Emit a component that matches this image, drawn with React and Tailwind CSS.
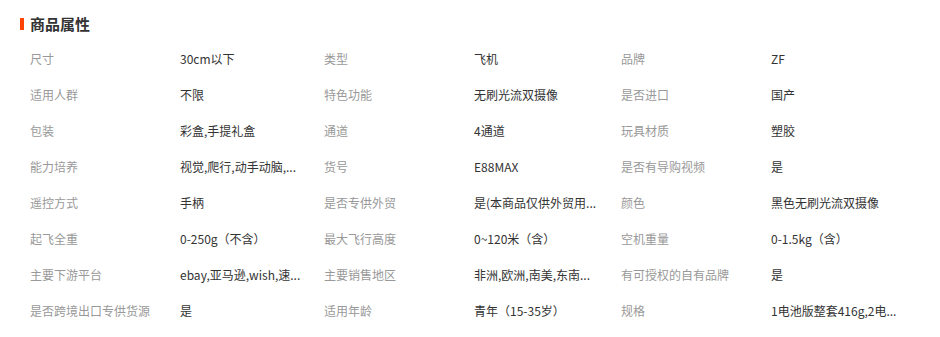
import React from "react";

const rows = [
  ["尺寸", "30cm以下", "类型", "飞机", "品牌", "ZF"],
  ["适用人群", "不限", "特色功能", "无刷光流双摄像", "是否进口", "国产"],
  ["包装", "彩盒,手提礼盒", "通道", "4通道", "玩具材质", "塑胶"],
  ["能力培养", "视觉,爬行,动手动脑,...", "货号", "E88MAX", "是否有导购视频", "是"],
  ["遥控方式", "手柄", "是否专供外贸", "是(本商品仅供外贸用...", "颜色", "黑色无刷光流双摄像"],
  ["起飞全重", "0-250g（不含）", "最大飞行高度", "0~120米（含）", "空机重量", "0-1.5kg（含）"],
  ["主要下游平台", "ebay,亚马逊,wish,速...", "主要销售地区", "非洲,欧洲,南美,东南...", "有可授权的自有品牌", "是"],
  ["是否跨境出口专供货源", "是", "适用年龄", "青年（15-35岁）", "规格", "1电池版整套416g,2电..."],
];

export default function App() {
  return (
    <div
      className="w-[940px] h-[337px] bg-white overflow-hidden"
      style={{ fontFamily: '"Noto Sans CJK SC", "Microsoft YaHei", sans-serif' }}
    >
      <div className="flex items-center h-[20px] mt-[14px] pl-[20px]">
        <div className="w-[4px] h-[12px] bg-[#ff4400]" />
        <div className="ml-[6px] text-[15px] font-bold text-[#333] leading-[20px]">商品属性</div>
      </div>
      <div className="mt-[7px] pl-[30px]">
        {rows.map((r, i) => (
          <div
            key={i}
            className="grid grid-cols-[150px_144px_150px_147px_150px_1fr] h-[36px] items-center text-[12px] leading-[16px] whitespace-nowrap"
          >
            <div className="text-[#999]">{r[0]}</div>
            <div className="text-[#333]">{r[1]}</div>
            <div className="text-[#999]">{r[2]}</div>
            <div className="text-[#333]">{r[3]}</div>
            <div className="text-[#999]">{r[4]}</div>
            <div className="text-[#333]">{r[5]}</div>
          </div>
        ))}
      </div>
    </div>
  );
}
